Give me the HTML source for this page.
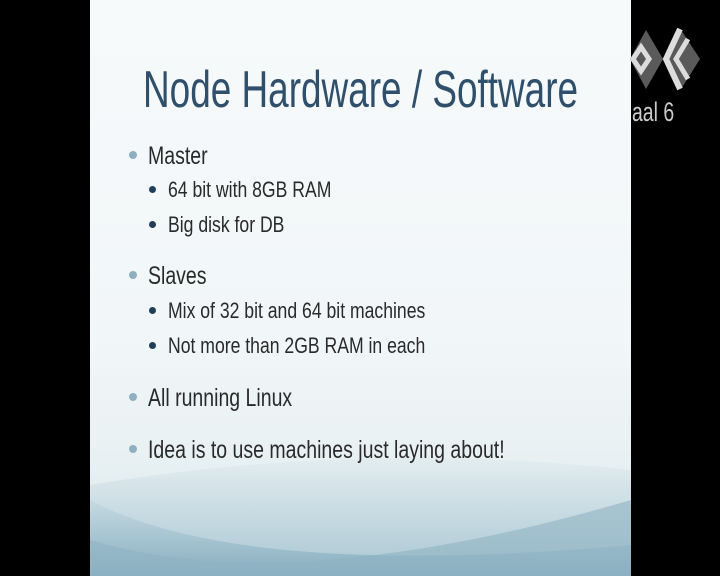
<!DOCTYPE html>
<html><head><style>
body{margin:0;width:720px;height:576px;background:#000;overflow:hidden;position:relative;font-family:"Liberation Sans",sans-serif}
.slide{position:absolute;left:90px;top:0;width:541px;height:576px;overflow:hidden;
background:linear-gradient(180deg,#f7fafb 0%,#f1f6f8 60%,#e9f1f3 78%,#d6e5ea 100%)}
.t{position:absolute;white-space:nowrap;transform-origin:0 0;transform:scaleX(0.78);color:#2a2a2a}
.s{transform:scaleX(0.80)}
.d{position:absolute;border-radius:50%}
</style></head><body>
<div class="slide">
<svg width="541" height="576" style="position:absolute;left:0;top:0">
<defs><linearGradient id="g" x1="0" y1="0" x2="0" y2="1"><stop offset="0" stop-color="#c6dae2"/><stop offset="1" stop-color="#86aec0"/></linearGradient>
<linearGradient id="g2" x1="0" y1="0" x2="0" y2="1"><stop offset="0" stop-color="#e3edf0"/><stop offset="1" stop-color="#a9c6d2"/></linearGradient></defs>
<path d="M0 485 Q270 440 541 470 L541 576 L0 576Z" fill="url(#g2)"/>
<path d="M0 500 Q150 580 541 545 L541 576 L0 576Z" fill="url(#g)"/>
<path d="M0 540 Q200 600 541 500 L541 576 L0 576Z" fill="#8fb2c3" opacity="0.6"/>
</svg>
<div class="t" style="left:53px;top:60px;font-size:52px;color:#2f4f6a;transform:scaleX(0.71)">Node Hardware / Software</div>
<div class="d" style="left:39px;top:151px;width:8px;height:8px;background:#8fb0c0"></div>
<div class="t" style="left:58px;top:142px;font-size:25px">Master</div>
<div class="d" style="left:59px;top:186px;width:7px;height:7px;background:#1f3f5a"></div>
<div class="t s" style="left:78px;top:177px;font-size:22px">64 bit with 8GB RAM</div>
<div class="d" style="left:59px;top:221px;width:7px;height:7px;background:#1f3f5a"></div>
<div class="t s" style="left:78px;top:212px;font-size:22px">Big disk for DB</div>
<div class="d" style="left:39px;top:271px;width:8px;height:8px;background:#8fb0c0"></div>
<div class="t" style="left:58px;top:262px;font-size:25px">Slaves</div>
<div class="d" style="left:59px;top:307px;width:7px;height:7px;background:#1f3f5a"></div>
<div class="t s" style="left:78px;top:298px;font-size:22px">Mix of 32 bit and 64 bit machines</div>
<div class="d" style="left:59px;top:342px;width:7px;height:7px;background:#1f3f5a"></div>
<div class="t s" style="left:78px;top:333px;font-size:22px">Not more than 2GB RAM in each</div>
<div class="d" style="left:39px;top:393px;width:8px;height:8px;background:#8fb0c0"></div>
<div class="t" style="left:58px;top:384px;font-size:25px">All running Linux</div>
<div class="d" style="left:39px;top:445px;width:8px;height:8px;background:#8fb0c0"></div>
<div class="t" style="left:58px;top:436px;font-size:25px">Idea is to use machines just laying about!</div>
</div>
<svg width="90" height="70" style="position:absolute;left:630px;top:25px">
<path d="M0 34 L16 5 L33 34 L51 5 L70 34 L51 64 L33 34 L16 64Z" fill="#5a5a5a"/>
<path d="M3 34 L11 22 L19 34 L11 46Z" fill="none" stroke="#ddd" stroke-width="5"/>
<path d="M50 4 L36 34 L50 64" stroke="#ddd" stroke-width="6" fill="none"/>
<path d="M58 14 L46 34 L58 54" stroke="#ddd" stroke-width="5" fill="none"/>
</svg>
<div style="position:absolute;left:632px;top:97px;color:#ccc;font-size:27px;transform:scaleX(0.72);transform-origin:0 0">aal 6</div>
</body></html>
